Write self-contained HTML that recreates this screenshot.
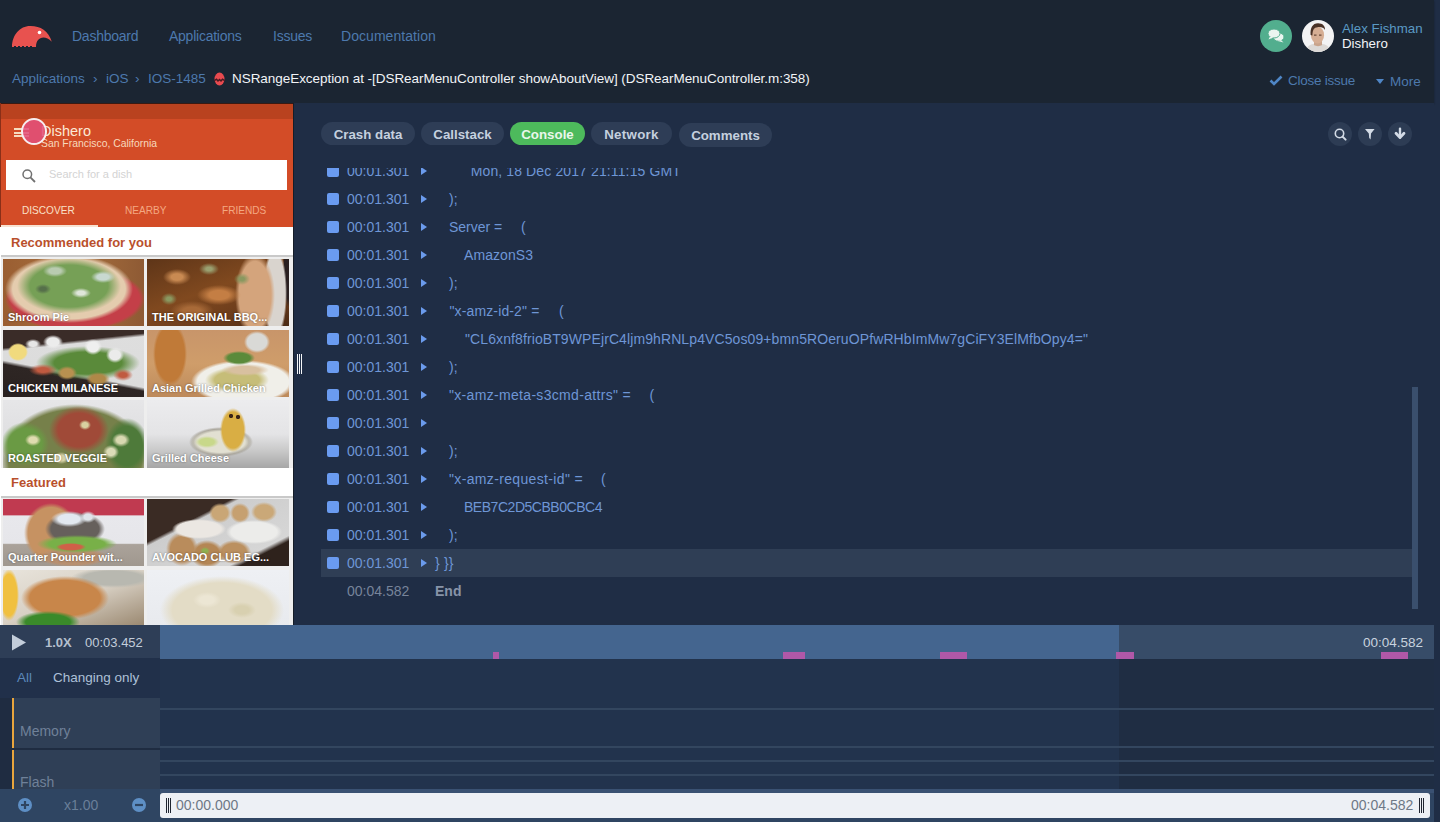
<!DOCTYPE html>
<html><head><meta charset="utf-8">
<style>
*{margin:0;padding:0;box-sizing:border-box}
html,body{width:1440px;height:822px;overflow:hidden;background:#1f2d45;font-family:"Liberation Sans",sans-serif}
.a{position:absolute;white-space:nowrap}
#hdr{position:absolute;left:0;top:0;width:1434px;height:103px;background:#1b2532;box-shadow:0 1px 2px rgba(0,0,0,.35)}
.nav{font-size:14px;color:#4d79ad;line-height:16px;letter-spacing:-.25px}
.crumb{font-size:13.5px;color:#4d79ad;line-height:16px}
#phone{position:absolute;left:0;top:103px;width:294px;height:522px;background:#fff;overflow:hidden;border-right:1px solid #161d28}
#content{position:absolute;left:294px;top:103px;width:1140px;height:522px;background:#1f2d45}
.pill{position:absolute;top:122px;height:23px;border-radius:12px;background:#2e3d56;color:#c5d0df;font-weight:700;font-size:13.3px;line-height:23px;padding-top:1px;text-align:center}
.ibtn{position:absolute;top:122px;width:24px;height:24px;border-radius:12px;background:#2d3c54}
#console{position:absolute;left:321px;top:168px;width:1091px;height:441px;overflow:hidden}
.row{position:absolute;left:0;width:1091px;height:28px}
.ph{overflow:hidden}
.lbl{left:5px;top:52px;font-size:11px;font-weight:700;line-height:13px;color:#fff;text-shadow:0 0 2px rgba(0,0,0,.5)}
.row .sq{position:absolute;left:6px;top:8px;width:12px;height:12px;border-radius:2px;background:#6a9bf0}
.row .t{position:absolute;left:26px;top:0;line-height:28px;font-size:14px;color:#6e96d6}
.row .tri{position:absolute;left:100px;top:10px;width:0;height:0;border-left:6px solid #6b9bec;border-top:4px solid transparent;border-bottom:4px solid transparent}
.row .m{position:absolute;top:0;line-height:28px;font-size:14px;color:#6e96d6;white-space:pre}
</style></head>
<body>

<div id="hdr">
 <svg class="a" style="left:10px;top:24px" width="46" height="26" viewBox="0 0 46 26">
  <path d="M2 23 C2 11 10 2 20 2 C30 1.8 38.5 6.5 41.8 17.8 C39 14.8 36 13.5 33.5 13.5 C29 13.5 26 17 26 23 Z" fill="#e8524f"/>
  <circle cx="29.5" cy="8.5" r="1.8" fill="#fff"/>
  <rect x="4" y="22" width="2" height="1.5" fill="#1b2433"/><rect x="8" y="22" width="2" height="1.5" fill="#1b2433"/><rect x="12" y="22" width="2" height="1.5" fill="#1b2433"/><rect x="16" y="22" width="2" height="1.5" fill="#1b2433"/><rect x="20" y="22" width="2" height="1.5" fill="#1b2433"/>
 </svg>
 <div class="a nav" style="left:72px;top:28px">Dashboard</div>
 <div class="a nav" style="left:169px;top:28px">Applications</div>
 <div class="a nav" style="left:273px;top:28px">Issues</div>
 <div class="a nav" style="left:341px;top:28px;letter-spacing:.05px">Documentation</div>
 <div class="a crumb" style="left:12px;top:71px">Applications</div>
 <div class="a crumb" style="left:93px;top:71px">&rsaquo;</div>
 <div class="a crumb" style="left:106px;top:71px">iOS</div>
 <div class="a crumb" style="left:135px;top:71px">&rsaquo;</div>
 <div class="a crumb" style="left:148px;top:71px">IOS-1485</div>
 <svg class="a" style="left:214px;top:72px" width="11" height="14" viewBox="0 0 11 14">
  <ellipse cx="5.5" cy="7" rx="5" ry="6.5" fill="#e84a4f"/>
  <path d="M0.3 8.6 L2.5 7.2 L4 9 L5.5 7.5 L7 9 L8.5 7.2 L10.7 8.6" stroke="#4a1820" stroke-width="1.5" fill="none"/>
 </svg>
 <div class="a crumb" style="left:232px;top:71px;color:#f2f4f7;letter-spacing:-.05px">NSRangeException at -[DSRearMenuController showAboutView] (DSRearMenuController.m:358)</div>
 <div class="a" style="left:1260px;top:20px;width:32px;height:32px;border-radius:16px;background:#52ae8e"></div>
 <svg class="a" style="left:1266px;top:27px" width="20" height="18" viewBox="0 0 20 18">
  <ellipse cx="12.5" cy="10" rx="5.5" ry="4.2" fill="#eaf5f0" stroke="#52ae8e" stroke-width="1"/>
  <path d="M15 13 L17.5 15.5 L12 14 Z" fill="#eaf5f0"/>
  <ellipse cx="8" cy="6.5" rx="6" ry="4.5" fill="#eaf5f0" stroke="#52ae8e" stroke-width="1"/>
  <path d="M4 9.5 L2.5 12.5 L7.5 10.5 Z" fill="#eaf5f0"/>
 </svg>
  <div class="a" style="left:1302px;top:20px;width:32px;height:32px;border-radius:50%;overflow:hidden"><svg width="32" height="32" viewBox="0 0 32 32" style="display:block">
   <rect width="32" height="32" fill="#f3f3f4"/>
   <path d="M3 32 C4 26 9 23.5 16 23.5 C23 23.5 28 26 29 32 Z" fill="#dcd9d6"/>
   <path d="M12 21 L12 25 C14 26.5 18 26.5 20 25 L20 21 Z" fill="#c9a48c"/>
   <ellipse cx="15.5" cy="15" rx="6.6" ry="8.6" fill="#d6ae94"/>
   <path d="M8.6 15 C8 8 10.5 3.2 16 3.2 C20.8 3.2 23.3 6 23 10 C21.5 7.5 19 6.8 15.5 7.2 C12 7.6 10.6 9.5 10.4 15.5 Z" fill="#4a3226"/>
   <path d="M12 15.2 H14.5 M17 15.2 H19.5" stroke="#6a4a3a" stroke-width="1.2"/>
 </svg></div>
 <div class="a" style="left:1342px;top:21px;font-size:13.3px;line-height:16px;color:#5a9ac4">Alex Fishman</div>
 <div class="a" style="left:1342px;top:36px;font-size:13.3px;line-height:16px;color:#f2f4f7">Dishero</div>
 <svg class="a" style="left:1269px;top:75px" width="14" height="11" viewBox="0 0 14 11">
  <path d="M1.5 5.5 L5 9 L12.5 1.5" stroke="#4f86c6" stroke-width="2.6" fill="none"/>
 </svg>
 <div class="a crumb" style="left:1288px;top:72.5px;letter-spacing:-.25px">Close issue</div>
 <div class="a" style="left:1376px;top:79px;width:0;height:0;border-left:4px solid transparent;border-right:4px solid transparent;border-top:5px solid #4f86c6"></div>
 <div class="a crumb" style="left:1390px;top:73.5px">More</div>
</div>


<div id="phone">
 <div class="a" style="left:0;top:0;width:293px;height:16px;background:#b9421f"></div>
 <div class="a" style="left:0;top:0;width:293px;height:1px;background:#3a1a12"></div>
 <div class="a" style="left:0;top:16px;width:293px;height:108px;background:#d34c27"></div>
 <div class="a" style="left:0;top:0;width:1px;height:124px;background:#8a2f18"></div>
 <div class="a" style="left:14px;top:25px;width:15px;height:2px;background:#f6dcc0"></div>
 <div class="a" style="left:14px;top:28.5px;width:15px;height:2px;background:#f6dcc0"></div>
 <div class="a" style="left:14px;top:32px;width:15px;height:2px;background:#f6dcc0"></div>
 <div class="a" style="left:41px;top:18px;font-size:14.5px;line-height:20px;color:#fbe8d6">Dishero</div>
 <div class="a" style="left:41px;top:35px;font-size:10.4px;line-height:12px;color:#f7d9bd">San Francisco, California</div>
 <div class="a" style="left:21px;top:15px;width:26px;height:27px;border-radius:50%;border:2px solid #f7eef0;background:rgba(226,80,125,.85)"></div>
 <div class="a" style="left:6px;top:57px;width:281px;height:30px;background:#fff"></div>
 <svg class="a" style="left:21px;top:65px" width="16" height="16" viewBox="0 0 16 16"><circle cx="6.3" cy="6.3" r="4.3" stroke="#707070" stroke-width="1.5" fill="none"/><path d="M9.4 9.4 L14 14" stroke="#707070" stroke-width="1.8"/></svg>
 <div class="a" style="left:49px;top:65px;font-size:11px;line-height:13px;color:#d3d3d3">Search for a dish</div>
 <div class="a" style="left:22px;top:102px;font-size:10.1px;line-height:12px;color:#f9e0c8">DISCOVER</div>
 <div class="a" style="left:125px;top:102px;font-size:10.1px;line-height:12px;color:#f4a882">NEARBY</div>
 <div class="a" style="left:222px;top:102px;font-size:10.1px;line-height:12px;color:#f4a882">FRIENDS</div>
 <div class="a" style="left:1px;top:122px;width:97px;height:2px;background:#f7e3d3"></div>
 <div class="a" style="left:11px;top:132px;font-size:13px;font-weight:700;line-height:16px;color:#b9502c">Recommended for you</div>
 <div class="a" style="left:1px;top:152px;width:292px;height:2px;background:#c9c9c9"></div>
 <div class="a" style="left:1px;top:154px;width:292px;height:211px;background:#eeeeee"></div>
<!--P1-->
<div class="a ph" style="left:3px;top:156px;width:141px;height:67px;background:radial-gradient(12px 6px at 100px 18px, #c8d8d0 0%, #c8d8d0 50%, transparent 100%),radial-gradient(12px 6px at 52px 12px, #b9cbb0 0%, #b9cbb0 50%, transparent 100%),radial-gradient(10px 5px at 78px 34px, #dfe6da 0%, #dfe6da 40%, transparent 100%),radial-gradient(8px 5px at 40px 30px, #56704a 0%, #56704a 40%, transparent 100%),radial-gradient(52px 28px at 66px 27px, #76a056 0%, #76a056 75%, transparent 100%),radial-gradient(64px 34px at 66px 30px, #e4ccae 0%, #e4ccae 88%, transparent 100%),radial-gradient(70px 32px at 72px 40px, #c43f48 0%, #c43f48 92%, transparent 100%),linear-gradient(90deg,#9a5e32,#a8703e 50%,#8e5a34)"><div class="a lbl">Shroom Pie</div></div>
<div class="a ph" style="left:147px;top:156px;width:141.5px;height:67px;background:radial-gradient(14px 8px at 30px 18px, #c98a52 0%, #c98a52 40%, transparent 100%),radial-gradient(22px 10px at 72px 36px, #c47e44 0%, #c47e44 45%, transparent 100%),radial-gradient(22px 10px at 45px 52px, #a86a38 0%, #a86a38 40%, transparent 100%),radial-gradient(10px 6px at 62px 10px, #9aa070 0%, #9aa070 30%, transparent 100%),radial-gradient(8px 6px at 22px 40px, #8a9860 0%, #8a9860 30%, transparent 100%),radial-gradient(8px 6px at 95px 20px, #8a9860 0%, #8a9860 30%, transparent 100%),radial-gradient(20px 42px at 108px 36px, #d4a47c 0%, #d4a47c 80%, transparent 100%),radial-gradient(12px 46px at 128px 34px, #d9d4ce 0%, #d9d4ce 85%, transparent 100%),radial-gradient(5px 40px at 141px 8px, #2a2020 0%, #2a2020 80%, transparent 100%),linear-gradient(160deg,#5e3518,#80491f 45%,#6b3c1c 75%,#4a2a14)"><div class="a lbl">THE ORIGINAL BBQ...</div></div>
<div class="a ph" style="left:3px;top:227px;width:141px;height:67px;background:radial-gradient(10px 9px at 15px 22px, #f1da7e 0%, #f1da7e 80%, transparent 100%),radial-gradient(10px 7px at 50px 12px, #ececec 0%, #ececec 60%, transparent 100%),radial-gradient(9px 8px at 90px 17px, #efefef 0%, #efefef 60%, transparent 100%),radial-gradient(9px 8px at 112px 25px, #ebebeb 0%, #ebebeb 60%, transparent 100%),radial-gradient(8px 5px at 30px 14px, #e6e6e6 0%, #e6e6e6 50%, transparent 100%),radial-gradient(10px 7px at 64px 43px, #b89050 0%, #b89050 60%, transparent 100%),radial-gradient(12px 7px at 95px 49px, #b08848 0%, #b08848 60%, transparent 100%),radial-gradient(14px 6px at 40px 40px, #c05a40 0%, #c05a40 40%, transparent 100%),radial-gradient(10px 6px at 120px 45px, #c05a40 0%, #c05a40 40%, transparent 100%),radial-gradient(52px 17px at 85px 33px, #5a8a3a 0%, #5a8a3a 65%, transparent 100%),linear-gradient(174deg,#3a2c28 0%,#3a2c28 22%,rgba(58,44,40,0) 26%),linear-gradient(191deg,#dedede 0%,#dcdcdc 61%,#2e2624 65%,#2a2220 100%)"><div class="a lbl">CHICKEN MILANESE</div></div>
<div class="a ph" style="left:147px;top:227px;width:141.5px;height:67px;background:radial-gradient(16px 7px at 92px 28px, #5a8a3a 0%, #5a8a3a 70%, transparent 100%),radial-gradient(24px 6px at 98px 40px, #d8c0a0 0%, #d8c0a0 60%, transparent 100%),radial-gradient(32px 13px at 90px 50px, #c6bd78 0%, #c6bd78 70%, transparent 100%),radial-gradient(52px 22px at 96px 52px, #f0efe9 0%, #f0efe9 88%, transparent 100%),radial-gradient(13px 11px at 110px 12px, #d9d9d6 0%, #d9d9d6 75%, transparent 100%),radial-gradient(17px 32px at 23px 24px, #c07a38 0%, #c07a38 85%, transparent 100%),linear-gradient(180deg,#c8956a,#cf9d6a 50%,#bd8a5a)"><div class="a lbl">Asian Grilled Chicken</div></div>
<div class="a ph" style="left:3px;top:297px;width:141px;height:68px;background:radial-gradient(8px 6px at 30px 40px, #e0dcb0 0%, #e0dcb0 50%, transparent 100%),radial-gradient(9px 7px at 118px 40px, #d8d8b0 0%, #d8d8b0 50%, transparent 100%),radial-gradient(8px 7px at 108px 52px, #dcdcb8 0%, #dcdcb8 50%, transparent 100%),radial-gradient(9px 6px at 58px 58px, #d8d4a8 0%, #d8d4a8 50%, transparent 100%),radial-gradient(6px 5px at 82px 25px, #d8d0a0 0%, #d8d0a0 50%, transparent 100%),radial-gradient(30px 24px at 76px 30px, #a04a38 0%, #a04a38 70%, transparent 100%),radial-gradient(24px 22px at 22px 44px, #6a9a44 0%, #6a9a44 70%, transparent 100%),radial-gradient(22px 28px at 124px 46px, #4e7a3a 0%, #4e7a3a 70%, transparent 100%),radial-gradient(74px 56px at 72px 60px, #76804a 0%, #76804a 90%, transparent 100%),linear-gradient(180deg,#e6e6e8 0%,#dedee0 60%,#c8c8c0 100%)"><div class="a lbl">ROASTED VEGGIE</div></div>
<div class="a ph" style="left:147px;top:297px;width:141.5px;height:68px;background:radial-gradient(2.5px 2.5px at 84px 16px, #3a2418 0%, #3a2418 70%, transparent 100%),radial-gradient(2.5px 2.5px at 91px 17px, #3a2418 0%, #3a2418 70%, transparent 100%),radial-gradient(13px 22px at 86px 30px, #d9ae44 0%, #d9ae44 82%, transparent 100%),radial-gradient(12px 6px at 60px 42px, #c8d88a 0%, #c8d88a 60%, transparent 100%),radial-gradient(30px 13px at 74px 42px, #e2e0d2 0%, #e2e0d2 80%, transparent 100%),radial-gradient(32px 15px at 74px 42px, #a8a49a 0%, #a8a49a 86%, transparent 100%),linear-gradient(180deg,#ececee 0%,#e4e4e6 50%,#c8c8c8 75%,#a6a6a6 100%)"><div class="a lbl">Grilled Cheese</div></div>
<!--/P1-->

 <div class="a" style="left:1px;top:365px;width:292px;height:30px;background:#fff"></div>
 <div class="a" style="left:11px;top:372px;font-size:13px;font-weight:700;line-height:16px;color:#b9502c">Featured</div>
 <div class="a" style="left:1px;top:393px;width:292px;height:2px;background:#c9c9c9"></div>
 <div class="a" style="left:1px;top:395px;width:292px;height:127px;background:#eeeeee"></div>
<!--P2-->
<div class="a ph" style="left:3px;top:396px;width:141px;height:67px;background:radial-gradient(18px 8px at 66px 20px, #e2e8f0 0%, #e2e8f0 60%, transparent 100%),radial-gradient(8px 6px at 85px 18px, #dfe4ea 0%, #dfe4ea 50%, transparent 100%),radial-gradient(15px 4px at 68px 48px, #d06048 0%, #d06048 70%, transparent 100%),radial-gradient(40px 9px at 74px 45px, #78b048 0%, #78b048 70%, transparent 100%),radial-gradient(30px 17px at 72px 30px, #66605c 0%, #66605c 80%, transparent 100%),radial-gradient(35px 10px at 70px 58px, #b89070 0%, #b89070 75%, transparent 100%),radial-gradient(27px 30px at 48px 34px, #c69262 0%, #c69262 85%, transparent 100%),linear-gradient(180deg,#c03a50 0%,#c03a50 24%,#e8e8ec 25%,#e6e6ea 66%,#aaa29a 68%,#a0988f 100%)"><div class="a lbl">Quarter Pounder wit...</div></div>
<div class="a ph" style="left:147px;top:396px;width:141.5px;height:67px;background:radial-gradient(5px 4px at 58px 52px, #8fb050 0%, #8fb050 50%, transparent 100%),radial-gradient(27px 10px at 52px 30px, #ebe7e2 0%, #ebe7e2 82%, transparent 100%),radial-gradient(28px 12px at 107px 33px, #ececea 0%, #ececea 82%, transparent 100%),radial-gradient(11px 10px at 73px 14px, #c9a676 0%, #c9a676 70%, transparent 100%),radial-gradient(10px 10px at 93px 14px, #c6a070 0%, #c6a070 70%, transparent 100%),radial-gradient(13px 10px at 117px 13px, #caa878 0%, #caa878 70%, transparent 100%),radial-gradient(16px 17px at 35px 50px, #b98c5c 0%, #b98c5c 72%, transparent 100%),radial-gradient(17px 14px at 60px 55px, #b48654 0%, #b48654 72%, transparent 100%),radial-gradient(17px 12px at 87px 53px, #bb9060 0%, #bb9060 72%, transparent 100%),linear-gradient(153deg,#3a2b24 0%,#3a2b24 31%,#cdcdcd 34%,#d6d6d6 78%,#2e221c 82%,#2e221c 100%)"><div class="a lbl">AVOCADO CLUB EG...</div></div>
<div class="a ph" style="left:3px;top:466.5px;width:141px;height:56px;background:radial-gradient(10px 26px at 6px 25px, #f0c040 0%, #f0c040 80%, transparent 100%),radial-gradient(32px 11px at 45px 52px, #3a8a2a 0%, #3a8a2a 70%, transparent 100%),radial-gradient(44px 22px at 62px 28px, #c8864a 0%, #c8864a 80%, transparent 100%),radial-gradient(42px 10px at 110px 8px, #b8b8b0 0%, #b8b8b0 70%, transparent 100%),linear-gradient(160deg,#e8e4dc,#d8d0c4 50%,#9a8870 100%)"></div>
<div class="a ph" style="left:147px;top:466.5px;width:141.5px;height:56px;background:radial-gradient(14px 8px at 60px 30px, #ece6d4 0%, #ece6d4 50%, transparent 100%),radial-gradient(14px 8px at 95px 40px, #d8d0b0 0%, #d8d0b0 50%, transparent 100%),radial-gradient(62px 34px at 75px 40px, #e3dcc6 0%, #e3dcc6 80%, transparent 100%),linear-gradient(180deg,#eef0f4,#e8eaee)"></div>
<!--/P2-->

</div>

<div id="content"></div>

<div class="pill" style="left:321px;width:94px">Crash data</div>
<div class="pill" style="left:421px;width:83px">Callstack</div>
<div class="pill" style="left:510px;width:75px;background:#4dba5c;color:#e9f7ea">Console</div>
<div class="pill" style="left:591px;width:81px;letter-spacing:.3px">Network</div>
<div class="pill" style="left:679px;width:93px;top:123px;height:24px;line-height:24px">Comments</div>
<div class="ibtn" style="left:1328px"></div>
<div class="ibtn" style="left:1358px"></div>
<div class="ibtn" style="left:1388px"></div>
<svg class="a" style="left:1328px;top:122px" width="84" height="24" viewBox="0 0 84 24">
 <circle cx="11.5" cy="11.5" r="4.2" stroke="#d3dbe6" stroke-width="1.6" fill="none"/>
 <path d="M14.6 14.6 L17.6 17.6" stroke="#d3dbe6" stroke-width="2" stroke-linecap="round"/>
 <path d="M37 7 L46.6 7 L43 11.5 L42.6 17.5 L41.2 16 L40.8 11.5 Z" fill="#d3dbe6"/>
 <path d="M72 6.8 L72 14.5" stroke="#d3dbe6" stroke-width="2.4" stroke-linecap="round"/>
 <path d="M68 11.3 L72 15.6 L76 11.3" stroke="#d3dbe6" stroke-width="2.8" fill="none" stroke-linecap="round" stroke-linejoin="round"/>
</svg>
<div class="a" style="left:297px;top:354px;width:1px;height:20px;background:#f4f6f8"></div>
<div class="a" style="left:299px;top:354px;width:1px;height:20px;background:#f4f6f8"></div>
<div class="a" style="left:301px;top:354px;width:1px;height:20px;background:#f4f6f8"></div>
<div id="console">
<div class="row" style="top:-11px"><div class="sq"></div><div class="t">00:01.301</div><div class="tri"></div><div class="m" style="left:149.7px;letter-spacing:0.12px">Mon, 18 Dec 2017 21:11:15 GMT</div></div>
<div class="row" style="top:17px"><div class="sq"></div><div class="t">00:01.301</div><div class="tri"></div><div class="m" style="left:128px;letter-spacing:0px">);</div></div>
<div class="row" style="top:45px"><div class="sq"></div><div class="t">00:01.301</div><div class="tri"></div><div class="m" style="left:128px;letter-spacing:0px">Server =</div><div class="m" style="left:200px">(</div></div>
<div class="row" style="top:73px"><div class="sq"></div><div class="t">00:01.301</div><div class="tri"></div><div class="m" style="left:143px;letter-spacing:0.07px">AmazonS3</div></div>
<div class="row" style="top:101px"><div class="sq"></div><div class="t">00:01.301</div><div class="tri"></div><div class="m" style="left:128px;letter-spacing:0px">);</div></div>
<div class="row" style="top:129px"><div class="sq"></div><div class="t">00:01.301</div><div class="tri"></div><div class="m" style="left:128.5px;letter-spacing:0.13px">"x-amz-id-2" =</div><div class="m" style="left:238px">(</div></div>
<div class="row" style="top:157px"><div class="sq"></div><div class="t">00:01.301</div><div class="tri"></div><div class="m" style="left:144px;letter-spacing:0.1px">"CL6xnf8frioBT9WPEjrC4ljm9hRNLp4VC5os09+bmn5ROeruOPfwRHbImMw7gCiFY3ElMfbOpy4="</div></div>
<div class="row" style="top:185px"><div class="sq"></div><div class="t">00:01.301</div><div class="tri"></div><div class="m" style="left:128px;letter-spacing:0px">);</div></div>
<div class="row" style="top:213px"><div class="sq"></div><div class="t">00:01.301</div><div class="tri"></div><div class="m" style="left:128px;letter-spacing:0.32px">"x-amz-meta-s3cmd-attrs" =</div><div class="m" style="left:328.5px">(</div></div>
<div class="row" style="top:241px"><div class="sq"></div><div class="t">00:01.301</div><div class="tri"></div></div>
<div class="row" style="top:269px"><div class="sq"></div><div class="t">00:01.301</div><div class="tri"></div><div class="m" style="left:128px;letter-spacing:0px">);</div></div>
<div class="row" style="top:297px"><div class="sq"></div><div class="t">00:01.301</div><div class="tri"></div><div class="m" style="left:128px;letter-spacing:0.35px">"x-amz-request-id" =</div><div class="m" style="left:280px">(</div></div>
<div class="row" style="top:325px"><div class="sq"></div><div class="t">00:01.301</div><div class="tri"></div><div class="m" style="left:143px;letter-spacing:-0.47px">BEB7C2D5CBB0CBC4</div></div>
<div class="row" style="top:353px"><div class="sq"></div><div class="t">00:01.301</div><div class="tri"></div><div class="m" style="left:128px;letter-spacing:0px">);</div></div>
<div class="row" style="top:381px;background:#2f3e55"><div class="sq"></div><div class="t">00:01.301</div><div class="tri"></div><div class="m" style="left:114px;letter-spacing:0.2px">} }}</div></div>
<div class="row" style="top:409px"><div class="t" style="color:#77849a">00:04.582</div><div class="m" style="left:114px;font-weight:700;color:#8794a8">End</div></div>

</div>
<div class="a" style="left:1412px;top:387px;width:6px;height:222px;background:#3a4f6d"></div>


<div id="tl">
 <div class="a" style="left:0;top:625px;width:160px;height:33px;background:#2e3e57"></div>
 <svg class="a" style="left:11px;top:634px" width="16" height="17" viewBox="0 0 16 17"><path d="M1 0.5 L15 8.5 L1 16.5 Z" fill="#c3cdda"/></svg>
 <div class="a" style="left:45px;top:635px;font-size:13px;font-weight:700;line-height:16px;color:#b4bfcd">1.0X</div>
 <div class="a" style="left:85px;top:635px;font-size:13px;line-height:16px;color:#c3cdda">00:03.452</div>
 <div class="a" style="left:0;top:658px;width:160px;height:40px;background:#21304a"></div>
 <div class="a" style="left:17px;top:670px;font-size:13.5px;line-height:16px;color:#5b88ba">All</div>
 <div class="a" style="left:53px;top:670px;font-size:13.5px;line-height:16px;color:#adc0d8">Changing only</div>
 <div class="a" style="left:0;top:698px;width:160px;height:91px;background:#1f2c41"></div>
 <div class="a" style="left:12px;top:698px;width:148px;height:50px;background:#2f3f56"></div>
 <div class="a" style="left:12px;top:750px;width:148px;height:39px;background:#2f3f56"></div>
 <div class="a" style="left:12px;top:698px;width:2px;height:50px;background:#e9a53d"></div>
 <div class="a" style="left:12px;top:750px;width:2px;height:39px;background:#e9a53d"></div>
 <div class="a" style="left:20px;top:723px;font-size:14px;line-height:16px;color:#6f8199">Memory</div>
 <div class="a" style="left:0;top:750px;width:160px;height:39px;overflow:hidden"><div class="a" style="left:20px;top:24px;font-size:14px;line-height:16px;color:#6f8199">Flash</div></div>
 <div class="a" style="left:160px;top:625px;width:959px;height:34px;background:#44658f"></div>
 <div class="a" style="left:1119px;top:625px;width:315px;height:34px;background:#374c68"></div>
 <div class="a" style="left:1363px;top:635px;font-size:13.5px;line-height:16px;color:#c9d3df">00:04.582</div>
 <div class="a" style="left:493px;top:652px;width:6px;height:7px;background:#b058a8"></div>
 <div class="a" style="left:783px;top:652px;width:22px;height:7px;background:#b058a8"></div>
 <div class="a" style="left:940px;top:652px;width:27px;height:7px;background:#b058a8"></div>
 <div class="a" style="left:1116px;top:652px;width:18px;height:7px;background:#b058a8"></div>
 <div class="a" style="left:1381px;top:652px;width:27px;height:7px;background:#b058a8"></div>
 <div class="a" style="left:160px;top:659px;width:959px;height:130px;background:#22334d"></div>
 <div class="a" style="left:1119px;top:659px;width:315px;height:130px;background:#1f2d43"></div>
 <div class="a" style="left:160px;top:708px;width:1274px;height:2px;background:#33465f"></div>
 <div class="a" style="left:160px;top:746px;width:1274px;height:2px;background:#33465f"></div>
 <div class="a" style="left:160px;top:760px;width:1274px;height:2px;background:#33465f"></div>
 <div class="a" style="left:160px;top:774px;width:1274px;height:2px;background:#33465f"></div>
 <div class="a" style="left:0;top:789px;width:1434px;height:33px;background:#2f4562"></div>
 <svg class="a" style="left:17px;top:797px" width="16" height="16" viewBox="0 0 16 16"><circle cx="8" cy="8" r="7" fill="#5e8fc5"/><path d="M4 8 H12 M8 4 V12" stroke="#2f4562" stroke-width="2.2"/></svg>
 <div class="a" style="left:64px;top:797px;font-size:14px;line-height:16px;color:#6a7f99">x1.00</div>
 <svg class="a" style="left:131px;top:797px" width="16" height="16" viewBox="0 0 16 16"><circle cx="8" cy="8" r="7" fill="#5e8fc5"/><path d="M4 8 H12" stroke="#2f4562" stroke-width="2.2"/></svg>
 <div class="a" style="left:160px;top:789px;width:1274px;height:4px;background:#3a5172"></div>
 <div class="a" style="left:160px;top:793px;width:1270px;height:25px;background:#edf0f5;border-radius:3px"></div>
 <div class="a" style="left:166px;top:798px;width:1px;height:15px;background:#1e2430"></div>
 <div class="a" style="left:168px;top:798px;width:1px;height:15px;background:#1e2430"></div>
 <div class="a" style="left:170px;top:798px;width:1px;height:15px;background:#1e2430"></div>
 <div class="a" style="left:176px;top:797px;font-size:14px;line-height:16px;color:#6e7886">00:00.000</div>
 <div class="a" style="left:1351px;top:797px;font-size:14px;line-height:16px;color:#6e7886">00:04.582</div>
 <div class="a" style="left:1419px;top:798px;width:1px;height:15px;background:#1e2430"></div>
 <div class="a" style="left:1421px;top:798px;width:1px;height:15px;background:#1e2430"></div>
 <div class="a" style="left:1423px;top:798px;width:1px;height:15px;background:#1e2430"></div>
</div>
</body></html>
